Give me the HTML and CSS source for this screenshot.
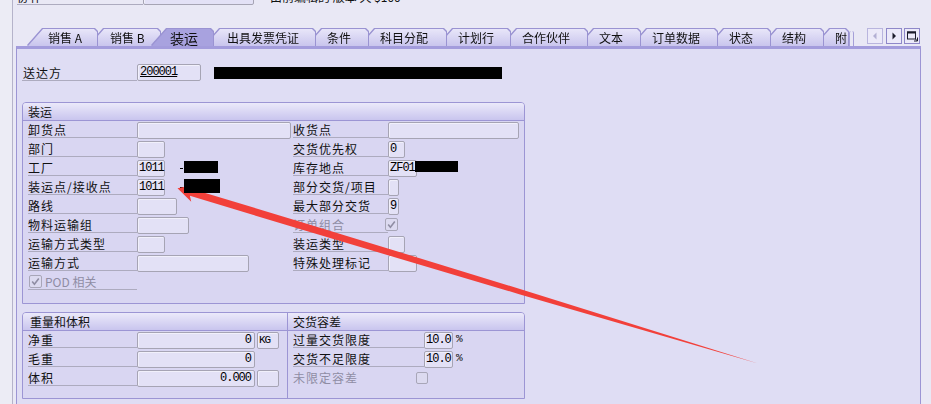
FILE: index.html
```html
<!DOCTYPE html>
<html lang="zh">
<head>
<meta charset="utf-8">
<title>装运</title>
<link rel="stylesheet" href="styles.css">
</head>
<body>
<div class="screen">
  <div class="lstrip"></div>
  <div class="main">
    <div class="toprow">
      <div class="toprow-in">
        <div class="lbl top-lbl">协作</div>
        <div class="inp top-inp"></div>
        <div class="top-txt">由前编辑的 版本 天 $100</div>
      </div>
    </div>

    <div class="tabbar">
      <div class="tabs">
        <div class="tab t1"><div class="face">销售 A</div></div>
        <div class="tab t2"><div class="face">销售 B</div></div>
        <div class="tab t3 active"><div class="face">装运</div></div>
        <div class="tab t4"><div class="face">出具发票凭证</div></div>
        <div class="tab t5"><div class="face">条件</div></div>
        <div class="tab t6"><div class="face">科目分配</div></div>
        <div class="tab t7"><div class="face">计划行</div></div>
        <div class="tab t8"><div class="face">合作伙伴</div></div>
        <div class="tab t9"><div class="face">文本</div></div>
        <div class="tab t10"><div class="face">订单数据</div></div>
        <div class="tab t11"><div class="face">状态</div></div>
        <div class="tab t12"><div class="face">结构</div></div>
        <div class="tab t13"><div class="face">附</div></div>
        <div class="tabstack"></div>
      </div>
      <div class="navbtns">
        <div class="nb nb-off"><svg width="14" height="14" viewBox="0 0 14 14"><path d="M8.5 3.5 L5 7 L8.5 10.5Z" fill="#b3b0d4"/></svg></div>
        <div class="nb"><svg width="14" height="14" viewBox="0 0 14 14"><path d="M5.5 3.5 L9 7 L5.5 10.5Z" fill="#1c1c2c"/></svg></div>
        <div class="nb nb-last"><svg width="14" height="14" viewBox="0 0 14 14"><rect x="2.5" y="3" width="8" height="7" fill="none" stroke="#1c1c2c"/><rect x="2" y="2.5" width="9" height="2" fill="#1c1c2c"/><path d="M9 12 L12.5 12 L12.5 8.5" fill="none" stroke="#1c1c2c"/><path d="M10.5 10 L12.5 12" stroke="#1c1c2c"/></svg></div>
      </div>
    </div>

    <div class="panel">
      <div class="sold">
        <div class="lbl sold-lbl">送达方</div>
        <div class="inp sold-inp">200001</div>
        <div class="redact sold-red"></div>
      </div>

      <div class="group ship">
        <div class="ghead">装运</div>
        <div class="frows">
          <div class="f"><div class="lbl l1">卸货点</div><div class="inp w154"></div></div>
          <div class="f"><div class="lbl l2">收货点</div><div class="inp w131"></div></div>

          <div class="f"><div class="lbl l1">部门</div><div class="inp w28"></div></div>
          <div class="f"><div class="lbl l2">交货优先权</div><div class="inp w17">0</div></div>

          <div class="f"><div class="lbl l1">工厂</div><div class="inp w28">1011</div><div class="dash"></div><div class="redact red-a"></div></div>
          <div class="f"><div class="lbl l2">库存地点</div><div class="inp w29">ZF01</div><div class="redact red-c"></div></div>

          <div class="f"><div class="lbl l1">装运点/接收点</div><div class="inp w28">1011</div><div class="dash"></div><div class="redact red-b"></div></div>
          <div class="f"><div class="lbl l2">部分交货/项目</div><div class="inp w11"></div></div>

          <div class="f"><div class="lbl l1">路线</div><div class="inp w40"></div></div>
          <div class="f"><div class="lbl l2">最大部分交货</div><div class="inp w11">9</div></div>

          <div class="f"><div class="lbl l1">物料运输组</div><div class="inp w52"></div></div>
          <div class="f"><div class="lbl l2 grey">订单组合</div><div class="cb cb-order"><svg width="9" height="9" viewBox="0 0 9 9"><path d="M1.2 4.6 L3.4 7.2 L7.8 1.4" stroke="#8f8da3" stroke-width="1.6" fill="none"/></svg></div></div>

          <div class="f"><div class="lbl l1">运输方式类型</div><div class="inp w28"></div></div>
          <div class="f"><div class="lbl l2">装运类型</div><div class="inp w17"></div></div>

          <div class="f"><div class="lbl l1">运输方式</div><div class="inp w112"></div></div>
          <div class="f"><div class="lbl l2">特殊处理标记</div><div class="inp w29"></div></div>

          <div class="f"><div class="lbl l1 pod"><div class="cb"><svg width="9" height="9" viewBox="0 0 9 9"><path d="M1.2 4.6 L3.4 7.2 L7.8 1.4" stroke="#8f8da3" stroke-width="1.6" fill="none"/></svg></div><span class="grey podtxt">POD 相关</span></div></div>
          <div class="f"></div>
        </div>
      </div>

      <div class="bgroups">
        <div class="bg bg-left">
          <div class="ghead gh-left">重量和体积</div>
          <div class="brows">
            <div class="f"><div class="lbl l1">净重</div><div class="inp num w118">0</div><div class="inp unit">KG</div></div>
            <div class="f"><div class="lbl l1">毛重</div><div class="inp num w118">0</div></div>
            <div class="f"><div class="lbl l1">体积</div><div class="inp num w118">0.000</div><div class="inp unit"></div></div>
          </div>
        </div>
        <div class="bg bg-right">
          <div class="ghead gh-right">交货容差</div>
          <div class="brows">
            <div class="f"><div class="lbl l3">过量交货限度</div><div class="inp w29">10.0</div><div class="pct">%</div></div>
            <div class="f"><div class="lbl l3">交货不足限度</div><div class="inp w29">10.0</div><div class="pct">%</div></div>
            <div class="f"><div class="lbl l3 grey nolines">未限定容差</div><div class="cb cb-tol"></div></div>
          </div>
        </div>
      </div>
    </div>
  </div>
</div>

<svg class="arrow" width="931" height="404" viewBox="0 0 931 404">
  <polygon fill="#f2403a" points="177.5,188.3 196.4,184.6 191.9,189.0 301,221.9 520.8,289.2 758,363.5 519.2,294.2 299,228.8 189.9,195.7 191.2,201.8"/>
</svg>
</body>
</html>
```

FILE: styles.css
```css
body {
  margin: 0;
  width: 931px;
  height: 404px;
  overflow: hidden;
  position: relative;
  background: #e9e8f5;
  font-family: "Noto Sans CJK SC", "Noto Sans", sans-serif;
  font-size: 12px;
  color: #111;
}

.screen {
  display: flex;
  height: 404px;
}

.lstrip {
  width: 12px;
  flex: none;
  background: #ececf5;
  border-right: 1px solid #b5b3ca;
}

.main {
  flex: 1;
  min-width: 0;
  display: flex;
  flex-direction: column;
  padding: 0 10px 0 3px;
}

/* clipped top row */
.toprow {
  height: 5px;
  overflow: hidden;
  flex: none;
}
.toprow-in {
  display: flex;
  margin-top: -12px;
}
.top-lbl {
  margin-left: 1px;
  width: 126px;
}
.main .top-inp {
  width: 111px;
  margin-top: 0;
}
.top-txt {
  margin-left: 16px;
  line-height: 17px;
  white-space: nowrap;
}

/* tabs */
.tabbar {
  display: flex;
  flex: none;
  height: 18px;
  margin-top: 23px;
  padding: 0 1px 0 12px;
}
.tabs {
  display: flex;
  height: 18px;
}
.tab {
  position: relative;
  height: 17px;
  margin-top: 1px;
  flex: none;
  filter: drop-shadow(0 -1px 0 #9a93d2) drop-shadow(1px 0 0 #9a93d2) drop-shadow(-1px 0 0 #9a93d2);
}
.tab + .tab {
  margin-left: -8px;
}
.face {
  box-sizing: border-box;
  height: 17px;
  padding-left: 20px;
  line-height: 18px;
  white-space: nowrap;
  background: linear-gradient(#e8e6f9, #c9c5ed);
  clip-path: polygon(0 100%, 15px 0, calc(100% - 3px) 0, 100% 3px, 100% 100%);
}
.tab.active .face {
  background: #a8a2df;
  font-size: 14px;
  padding-left: 18px;
  line-height: 18px;
}
.t1 { width: 69px; z-index: 13; }
.t2 { width: 71px; z-index: 12; }
.t3 { width: 61px; z-index: 30; }
.t4 { width: 110px; z-index: 10; }
.t5 { width: 61px; z-index: 9; }
.t6 { width: 86px; z-index: 8; }
.t7 { width: 72px; z-index: 7; }
.t8 { width: 85px; z-index: 6; }
.t9 { width: 61px; z-index: 5; }
.t10 { width: 85px; z-index: 4; }
.t11 { width: 61px; z-index: 3; }
.t12 { width: 61px; z-index: 2; }
.t13 { width: 33px; z-index: 1; }
.t2 .face { padding-left: 21px; }
.t4 .face { padding-left: 22px; }
.t13 .face { padding-left: 20px; }
.tabstack {
  width: 3px;
  height: 15px;
  margin-top: 3px;
  margin-left: 1px;
  border-left: 1px solid #a59fd8;
  border-right: 1px solid #a59fd8;
  border-radius: 2px 2px 0 0;
}

.navbtns {
  display: flex;
  margin-left: auto;
}
.nb {
  box-sizing: border-box;
  width: 16px;
  height: 16px;
  border: 1px solid #8f88c9;
  background: #eceaf9;
  display: flex;
  align-items: center;
  justify-content: center;
}
.nb + .nb {
  margin-left: 3px;
}
.nb.nb-last {
  margin-left: 2px;
}
.nb.nb-off {
  border-color: #b9b5de;
}

/* panel */
.panel {
  flex: 1;
  border: 1px solid #9c95d4;
  border-top: 3px solid #a39cdc;
  border-bottom: 0;
  background: #dfddf4;
  padding: 15px 0 0 5px;
}

.sold {
  display: flex;
  height: 17px;
}
.sold-lbl {
  width: 115px;
  padding-left: 1px;
}
.main .sold-inp {
  width: 64px;
  margin-top: 0;
  text-decoration: underline;
}
.redact {
  background: #000;
  position: relative;
  z-index: 10;
  flex: none;
}
.sold-red {
  margin-left: 13px;
  margin-top: 3px;
  width: 288px;
  height: 12px;
}

.group {
  box-sizing: border-box;
  border: 1px solid #9c95d4;
  border-radius: 4px 4px 0 0;
  background: #d9d6f2;
}
.ship {
  margin-top: 21px;
  width: 503px;
}
.ghead {
  box-sizing: border-box;
  height: 18px;
  padding-left: 5px;
  line-height: 17px;
  border-bottom: 1px solid #9c95d4;
  border-radius: 3px 3px 0 0;
  background: linear-gradient(#ebe9fa, #c9c5ee);
}

.frows {
  display: grid;
  grid-template-columns: 265px 1fr;
  grid-auto-rows: 19px;
  padding: 0 0 11px 5px;
}
.f {
  display: flex;
  align-items: flex-start;
  min-width: 0;
}
.lbl {
  box-sizing: border-box;
  flex: none;
  height: 17px;
  padding-top: 2px;
  line-height: 14px;
  letter-spacing: 1px;
  white-space: nowrap;
  border-bottom: 1px solid #adabbf;
}
.l1 { width: 109px; }
.l2 { width: 95px; }
.l3 { width: 131px; }
.grey { color: #8f8da4; }

.inp {
  box-sizing: border-box;
  flex: none;
  height: 17px;
  margin-top: 1px;
  padding: 0 2px;
  border: 1px solid #a6a4b4;
  border-radius: 2px;
  background: #e3e1f6;
  box-shadow: inset 1px 1px 0 #f1f0fb;
  font-family: "Liberation Mono", monospace;
  font-size: 12px;
  letter-spacing: -1px;
  line-height: 15px;
  white-space: nowrap;
  color: #000;
}
.w11 { width: 11px; padding: 0 1px; }
.w17 { width: 17px; padding: 0 1px; }
.w28 { width: 28px; padding: 0 1px; }
.w29 { width: 29px; padding: 0 1px; }
.w40 { width: 40px; }
.w52 { width: 52px; }
.w112 { width: 112px; }
.w118 { width: 118px; }
.w131 { width: 131px; }
.w154 { width: 154px; }
.num { text-align: right; padding-right: 3px; }
.unit {
  width: 22px;
  margin-left: 2px;
  padding: 0 1px;
  font-size: 11px;
}

.dash {
  flex: none;
  width: 3px;
  height: 1px;
  background: #000;
  margin: 9px 0 0 15px;
}
.red-a {
  width: 34px;
  height: 12px;
  margin-top: 2px;
  margin-left: 1px;
}
.red-b {
  width: 36px;
  height: 14px;
  margin-top: 1px;
  margin-left: 1px;
}
.red-c {
  width: 43px;
  height: 11px;
  margin-top: 2px;
  margin-left: -2px;
}

.cb {
  box-sizing: border-box;
  flex: none;
  width: 13px;
  height: 13px;
  border: 1px solid #a8a6b8;
  border-radius: 2px;
  background: #dcdaf0;
  display: flex;
  align-items: center;
  justify-content: center;
}
.cb-order {
  margin-left: -3px;
  margin-top: 2px;
}
.cb-tol {
  width: 12px;
  height: 12px;
  margin-left: -8px;
  margin-top: 3px;
}
.pod {
  display: flex;
  align-items: center;
  padding-top: 0;
  padding-left: 1px;
  letter-spacing: 0;
}
.podtxt {
  margin-left: 3px;
  line-height: 14px;
  padding-top: 1px;
}
.nolines { border-bottom-color: transparent; }

.bgroups {
  display: flex;
  width: 503px;
  margin-top: 8px;
  box-sizing: border-box;
  border: 1px solid #9c95d4;
  border-radius: 4px 4px 0 0;
  background: #d9d6f2;
}
.bg-left { width: 264px; flex: none; }
.bg-right { flex: 1; border-left: 1px solid #9c95d4; }
.gh-left { padding-left: 7px; border-radius: 3px 0 0 0; }
.gh-right { padding-left: 5px; border-radius: 0 3px 0 0; }
.brows {
  display: grid;
  grid-auto-rows: 19px;
  padding: 0 0 10px 5px;
}
.pct {
  margin-left: 3px;
  line-height: 17px;
  font-family: "Liberation Mono", monospace;
  font-size: 11px;
}

.arrow {
  position: absolute;
  left: 0;
  top: 0;
  z-index: 5;
  pointer-events: none;
}
```
